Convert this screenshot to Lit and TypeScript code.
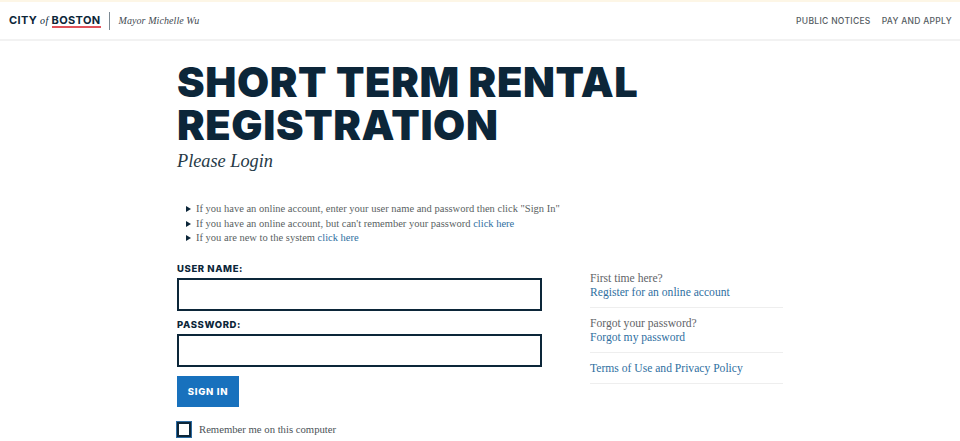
import { LitElement, html, css } from "lit";
import { customElement } from "lit/decorators.js";

@customElement("app-root")
export class AppRoot extends LitElement {
  static styles = css`
    :host { display: block; width: 960px; height: 441px; overflow: hidden; background: #fff; color: #0c2639; font-family: "Liberation Serif", serif; }
    .stripe { height: 2px; background: #fdf6e6; }
    header { height: 37px; display: flex; align-items: center; padding: 0 8px 0 9px; border-bottom: 2px solid #f2f2f2; }
    .logo { font: 700 11px/14px Inter, sans-serif; display: flex; align-items: baseline; gap: 3px; color: #0c2639; letter-spacing: .35px; }
    .of { font: italic 10px "Liberation Serif", serif; }
    .boston { border-bottom: 2px solid #e0525a; line-height: 12px; }
    .sep { width: 1px; height: 18px; background: #7d8a94; margin: 0 9px 0 8px; }
    .mayor { font: italic 10px "Liberation Serif", serif; color: #3f4a52; letter-spacing: .08px; }
    nav { margin-left: auto; display: flex; gap: 11px; font: 500 8.5px Inter, sans-serif; letter-spacing: .3px; color: #555c62; }
    main { padding: 20px 0 0 177px; }
    h1 { margin: 0; font: 900 41.5px/43px Inter, sans-serif; letter-spacing: .6px; color: #0c2639; }
    .sub { font: italic 18.3px/24px "Liberation Serif", serif; color: #273a47; margin-top: 2px; }
    ul { list-style: none; padding: 0 0 0 9px; margin: 29px 0 0; font: 10.5px/14.5px "Liberation Serif", serif; color: #5a5f63; }
    li { display: flex; align-items: center; gap: 5px; white-space: pre; }
    li::before { content: ""; border-left: 5px solid #0c2639; border-top: 3px solid transparent; border-bottom: 3px solid transparent; }
    a { color: #2f6f9f; text-decoration: none; }
    .cols { display: flex; margin-top: 17px; }
    .form { width: 365px; }
    label { display: block; font: 800 9.5px/12px Inter, sans-serif; letter-spacing: .6px; color: #0c2639; margin-bottom: 3px; }
    .input { height: 29px; border: 2px solid #0c2639; width: 361px; margin-bottom: 8px; }
    .btn { width: 62px; height: 31px; margin-top: 9px; background: #1871bd; color: #fff; font: 800 9.5px/31px Inter, sans-serif; letter-spacing: .7px; text-align: center; }
    .rem { display: flex; align-items: center; gap: 8px; margin-top: 15px; font: 10.7px/15px "Liberation Serif", serif; color: #4c5358; }
    .box { width: 10px; height: 11px; border: 2px solid #0c2639; outline: 1px solid #2c6ba3; background: #fff; }
    aside { margin-left: 48px; width: 193px; font: 11.6px/14px "Liberation Serif", serif; color: #5f6468; margin-top: 9px; }
    .item { border-bottom: 1px solid #eeeeee; padding-bottom: 7px; margin-bottom: 9px; }
  `;
  render() {
    return html`
      <div class="stripe"></div>
      <header>
        <div class="logo"><span>CITY</span><span class="of">of</span><span class="boston">BOSTON</span></div>
        <div class="sep"></div>
        <div class="mayor">Mayor Michelle Wu</div>
        <nav><span>PUBLIC NOTICES</span><span>PAY AND APPLY</span></nav>
      </header>
      <main>
        <h1>SHORT TERM RENTAL<br />REGISTRATION</h1>
        <div class="sub">Please Login</div>
        <ul>
          <li>If you have an online account, enter your user name and password then click "Sign In"</li>
          <li><span>If you have an online account, but can't remember your password <a>click here</a></span></li>
          <li><span>If you are new to the system <a>click here</a></span></li>
        </ul>
        <div class="cols">
          <div class="form">
            <label>USER NAME:</label>
            <div class="input"></div>
            <label>PASSWORD:</label>
            <div class="input"></div>
            <div class="btn">SIGN IN</div>
            <div class="rem"><div class="box"></div><span>Remember me on this computer</span></div>
          </div>
          <aside>
            <div class="item">First time here?<br /><a>Register for an online account</a></div>
            <div class="item">Forgot your password?<br /><a>Forgot my password</a></div>
            <div class="item"><a>Terms of Use and Privacy Policy</a></div>
          </aside>
        </div>
      </main>
    `;
  }
}
